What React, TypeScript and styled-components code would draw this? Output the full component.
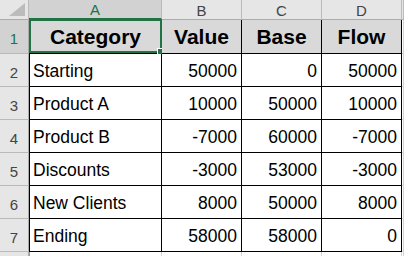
import React from 'react'
import styled, { createGlobalStyle } from 'styled-components'

const GlobalStyle = createGlobalStyle`
  html, body {
    margin: 0;
    padding: 0;
    background: #ffffff;
    overflow: hidden;
  }
  body {
    font-family: 'Liberation Sans', Arial, sans-serif;
  }
`

const Sheet = styled.div`
  display: grid;
  grid-template-columns: 29px 133px 80px 80px 80px 1fr;
  grid-template-rows: 20px 34px repeat(6, 33px) 1fr;
  width: 404px;
  height: 256px;
  overflow: hidden;
  background: #ffffff;
`

const Corner = styled.div`
  position: relative;
  background: #e6e6e6;
  border-right: 1px solid #bababa;
  border-bottom: 1px solid #ababab;
  box-sizing: border-box;
`

const CornerMark = styled.svg`
  position: absolute;
  right: 3px;
  bottom: 3px;
`

const ColHead = styled.div<{ $selected?: boolean }>`
  display: flex;
  align-items: center;
  justify-content: center;
  box-sizing: border-box;
  background: ${p => (p.$selected ? '#d2d2d2' : '#e6e6e6')};
  color: ${p => (p.$selected ? '#217346' : '#444444')};
  border-right: 1px solid #bababa;
  border-bottom: ${p => (p.$selected ? '2px solid #217346' : '1px solid #ababab')};
  font-size: 15px;
  padding-top: 1px;
`

const RowHead = styled.div<{ $selected?: boolean }>`
  display: flex;
  align-items: center;
  justify-content: center;
  box-sizing: border-box;
  background: ${p => (p.$selected ? '#d2d2d2' : '#e6e6e6')};
  color: ${p => (p.$selected ? '#217346' : '#444444')};
  border-right: 1px solid #ababab;
  border-bottom: 1px solid #bababa;
  font-size: 15px;
  padding-top: 4px;
`

type Kind = 'head' | 'text' | 'num'

const Cell = styled.div<{ $kind: Kind; $first?: boolean }>`
  position: relative;
  display: flex;
  align-items: center;
  box-sizing: border-box;
  justify-content: ${p =>
    p.$kind === 'head' ? 'center' : p.$kind === 'num' ? 'flex-end' : 'flex-start'};
  padding: ${p => (p.$kind === 'head' ? '1px 0 0' : '2px 4px 0 3px')};
  background: ${p => (p.$kind === 'head' ? '#d9d9d9' : '#ffffff')};
  border-right: 1px solid #000000;
  border-bottom: 1px solid #000000;
  border-left: ${p => (p.$first ? '1px solid #000000' : 'none')};
  color: #000000;
  font-size: ${p => (p.$kind === 'head' ? '21px' : '17.5px')};
  font-weight: ${p => (p.$kind === 'head' ? 700 : 400)};
  white-space: nowrap;
`

const Blank = styled.div<{ $first?: boolean }>`
  box-sizing: border-box;
  background: #ffffff;
  border-right: 1px solid #d4d4d4;
  border-bottom: 1px solid #d4d4d4;
  border-left: ${p => (p.$first ? '1px solid #9b9b9b' : 'none')};
`

const Selection = styled.div`
  position: absolute;
  left: -1px;
  top: -1px;
  width: 133px;
  height: 34px;
  box-sizing: border-box;
  border: 2px solid #217346;
  pointer-events: none;
`

const FillHandle = styled.div`
  position: absolute;
  left: 128px;
  top: 29px;
  width: 6px;
  height: 6px;
  box-sizing: border-box;
  background: #217346;
  outline: 1px solid #ffffff;
`

const columns = ['A', 'B', 'C', 'D']
const headers = ['Category', 'Value', 'Base', 'Flow']

const rows: [string, number, number, number][] = [
  ['Starting', 50000, 0, 50000],
  ['Product A', 10000, 50000, 10000],
  ['Product B', -7000, 60000, -7000],
  ['Discounts', -3000, 53000, -3000],
  ['New Clients', 8000, 50000, 8000],
  ['Ending', 58000, 58000, 0],
]

const App: React.FC = () => (
  <>
    <GlobalStyle />
    <Sheet>
      <Corner>
        <CornerMark width="16" height="13" viewBox="0 0 16 13">
          <polygon points="16,0 16,13 0,13" fill="#bcbcbc" />
        </CornerMark>
      </Corner>
      {columns.map((c, i) => (
        <ColHead key={c} $selected={i === 0}>
          {c}
        </ColHead>
      ))}
      <ColHead />

      <RowHead $selected>1</RowHead>
      {headers.map((h, i) => (
        <Cell key={h} $kind="head" $first={i === 0}>
          {h}
          {i === 0 && (
            <>
              <Selection />
              <FillHandle />
            </>
          )}
        </Cell>
      ))}
      <Blank />

      {rows.map((r, ri) => (
        <React.Fragment key={r[0]}>
          <RowHead>{ri + 2}</RowHead>
          <Cell $kind="text" $first>
            {r[0]}
          </Cell>
          <Cell $kind="num">{r[1]}</Cell>
          <Cell $kind="num">{r[2]}</Cell>
          <Cell $kind="num">{r[3]}</Cell>
          <Blank />
        </React.Fragment>
      ))}

      <RowHead />
      <Blank $first />
      <Blank />
      <Blank />
      <Blank />
      <Blank />
    </Sheet>
  </>
)

export default App
